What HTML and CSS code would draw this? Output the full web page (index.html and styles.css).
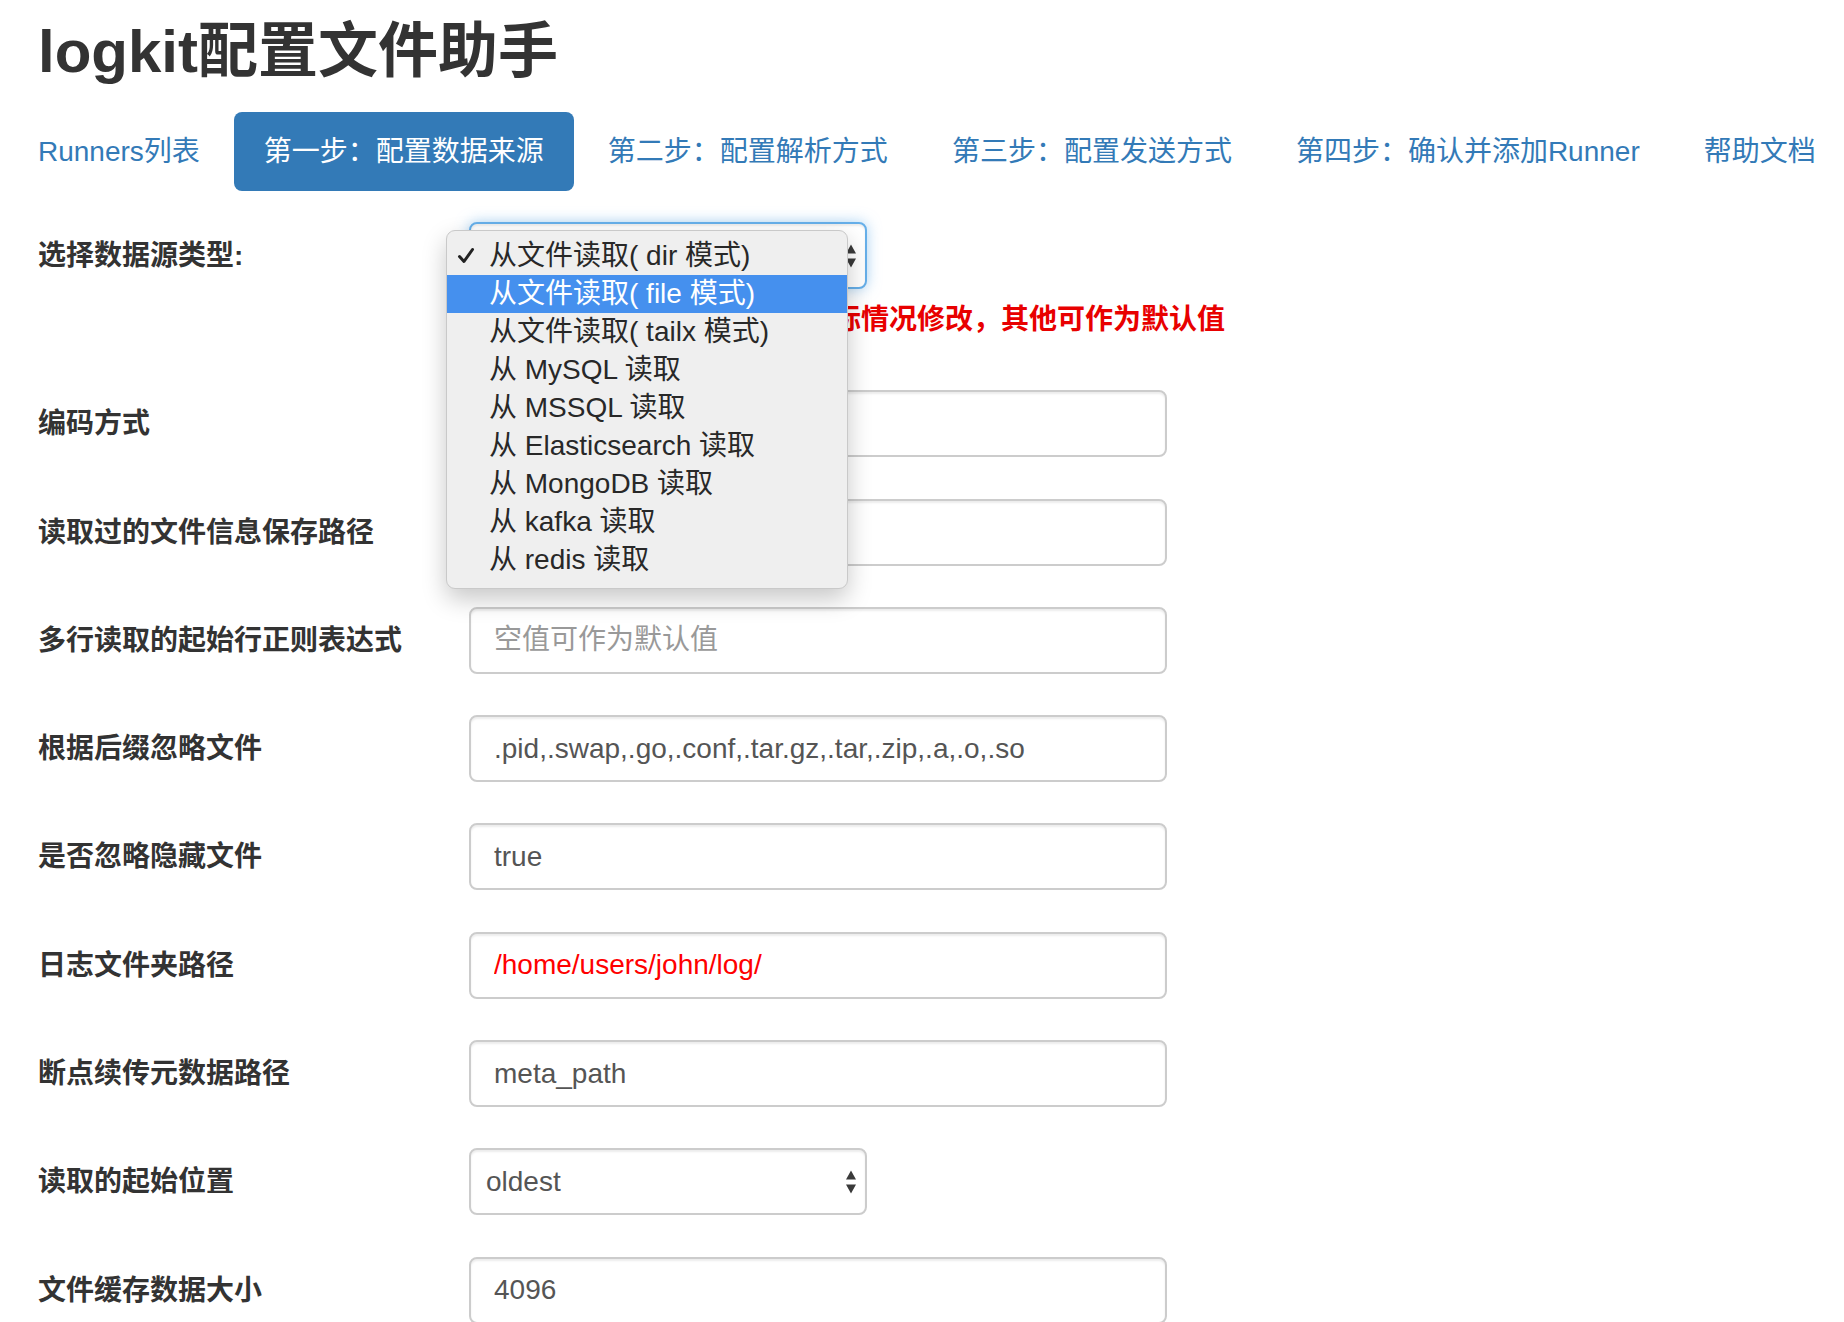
FILE: index.html
```html
<!DOCTYPE html>
<html>
<head>
  <meta charset="utf-8">
  <title>logkit配置文件助手</title>
  <link rel="stylesheet" href="styles.css">
</head>
<body>
  <div class="page">
    <h1 class="title">logkit配置文件助手</h1>

    <ul class="steps">
      <li><a href="#">Runners列表</a></li>
      <li class="active"><a href="#">第一步：配置数据来源</a></li>
      <li><a href="#">第二步：配置解析方式</a></li>
      <li><a href="#">第三步：配置发送方式</a></li>
      <li><a href="#">第四步：确认并添加Runner</a></li>
      <li><a href="#">帮助文档</a></li>
    </ul>

    <form class="config">
      <div class="row">
        <label>选择数据源类型:</label>
        <div class="control">
          <div class="picker focus">
            <span class="value">从文件读取( dir 模式)</span>
            <svg class="arrows" width="10" height="24" viewBox="0 0 10 24"><path d="M0 9.5 L5 0.5 L10 9.5 Z M0 14.5 L10 14.5 L5 23.5 Z"/></svg>
            <ul class="menu">
              <li class="checked">
                <svg class="tick" width="18" height="18" viewBox="0 0 18 18"><path d="M2.5 9.5 L7 14.5 L15.5 2.5" fill="none" stroke-width="3" stroke-linecap="round" stroke-linejoin="round"/></svg>
                从文件读取( dir 模式)
              </li>
              <li class="hover">从文件读取( file 模式)</li>
              <li>从文件读取( tailx 模式)</li>
              <li>从 MySQL 读取</li>
              <li>从 MSSQL 读取</li>
              <li>从 Elasticsearch 读取</li>
              <li>从 MongoDB 读取</li>
              <li>从 kafka 读取</li>
              <li>从 redis 读取</li>
            </ul>
          </div>
          <p class="notice">红色字体为必填项，请根据实际情况修改，其他可作为默认值</p>
        </div>
      </div>

      <div class="row">
        <label>编码方式</label>
        <div class="control"><input class="field" type="text" value=""></div>
      </div>

      <div class="row">
        <label>读取过的文件信息保存路径</label>
        <div class="control"><input class="field" type="text" value=""></div>
      </div>

      <div class="row">
        <label>多行读取的起始行正则表达式</label>
        <div class="control"><input class="field" type="text" placeholder="空值可作为默认值"></div>
      </div>

      <div class="row">
        <label>根据后缀忽略文件</label>
        <div class="control"><input class="field" type="text" value=".pid,.swap,.go,.conf,.tar.gz,.tar,.zip,.a,.o,.so"></div>
      </div>

      <div class="row">
        <label>是否忽略隐藏文件</label>
        <div class="control"><input class="field" type="text" value="true"></div>
      </div>

      <div class="row">
        <label>日志文件夹路径</label>
        <div class="control"><input class="field required" type="text" value="/home/users/john/log/"></div>
      </div>

      <div class="row">
        <label>断点续传元数据路径</label>
        <div class="control"><input class="field" type="text" value="meta_path"></div>
      </div>

      <div class="row">
        <label>读取的起始位置</label>
        <div class="control">
          <div class="picker">
            <span class="value">oldest</span>
            <svg class="arrows" width="10" height="24" viewBox="0 0 10 24"><path d="M0 9.5 L5 0.5 L10 9.5 Z M0 14.5 L10 14.5 L5 23.5 Z"/></svg>
          </div>
        </div>
      </div>

      <div class="row">
        <label>文件缓存数据大小</label>
        <div class="control"><input class="field" type="text" value="4096"></div>
      </div>
    </form>
  </div>
</body>
</html>
```

FILE: styles.css
```css
body {
  margin: 0;
  background: #fff;
  color: #333;
  font-family: "Liberation Sans", "Noto Sans CJK SC", sans-serif;
}
.page {
  padding: 0 38px;
}
.title {
  margin: 19px 0 27px;
  font-size: 60px;
  line-height: 66px;
  font-weight: 600;
  color: #333;
}
.steps {
  list-style: none;
  display: flex;
  margin: 0 0 0 -30px;
  padding: 0;
  white-space: nowrap;
}
.steps li {
  flex-shrink: 0;
}
.steps li + li {
  margin-left: 4px;
}
.steps a {
  display: block;
  padding: 20px 30px;
  font-size: 28px;
  line-height: 39px;
  color: #337ab7;
  text-decoration: none;
  border-radius: 8px;
}
.steps .active a {
  background: #337ab7;
  color: #fff;
}
.config {
  margin-top: 31px;
}
.row {
  display: grid;
  grid-template-columns: 431px 698px;
  align-items: start;
  margin-bottom: 41.3px;
}
.row label {
  font-size: 28px;
  line-height: 67px;
  font-weight: bold;
  color: #333;
}
.field {
  display: block;
  box-sizing: border-box;
  width: 698px;
  height: 67px;
  margin: 0;
  padding: 0 23px;
  border: 2px solid #ccc;
  border-radius: 8px;
  box-shadow: inset 0 2px 2px rgba(0, 0, 0, 0.075);
  font-family: "Liberation Sans", "Noto Sans CJK SC", sans-serif;
  font-size: 28px;
  color: #555;
  background: #fff;
  outline: none;
}
.field::placeholder {
  color: #999;
}
.field.required {
  color: #f00;
}
.picker {
  position: relative;
  box-sizing: border-box;
  width: 398px;
  height: 67px;
  padding: 0 9px 0 15px;
  display: flex;
  align-items: center;
  justify-content: space-between;
  border: 2px solid #ccc;
  border-radius: 8px;
  box-shadow: inset 0 2px 2px rgba(0, 0, 0, 0.075);
  font-size: 28px;
  color: #555;
  background: #fff;
}
.picker.focus {
  border-color: #66afe9;
  box-shadow: inset 0 2px 2px rgba(0, 0, 0, 0.075), 0 0 14px rgba(102, 175, 233, 0.55);
}
.arrows {
  fill: #3a3a3a;
}
.notice {
  margin: 11px 0 9px;
  font-size: 28px;
  line-height: 40px;
  font-weight: bold;
  color: #e80000;
  white-space: nowrap;
}
.menu {
  position: absolute;
  left: -25px;
  top: 6px;
  z-index: 10;
  box-sizing: border-box;
  width: 402px;
  margin: 0;
  padding: 6px 0 9px;
  list-style: none;
  background: #efefef;
  border: 1px solid #c9c9c9;
  border-radius: 9px;
  box-shadow: 0 10px 24px rgba(0, 0, 0, 0.22);
}
.menu li {
  position: relative;
  height: 38px;
  line-height: 38px;
  padding-left: 42px;
  font-size: 28px;
  color: #282828;
  white-space: nowrap;
}
.menu li.hover {
  background: #4590ee;
  color: #fff;
}
.tick {
  position: absolute;
  left: 10px;
  top: 10px;
  stroke: #222;
}
```
